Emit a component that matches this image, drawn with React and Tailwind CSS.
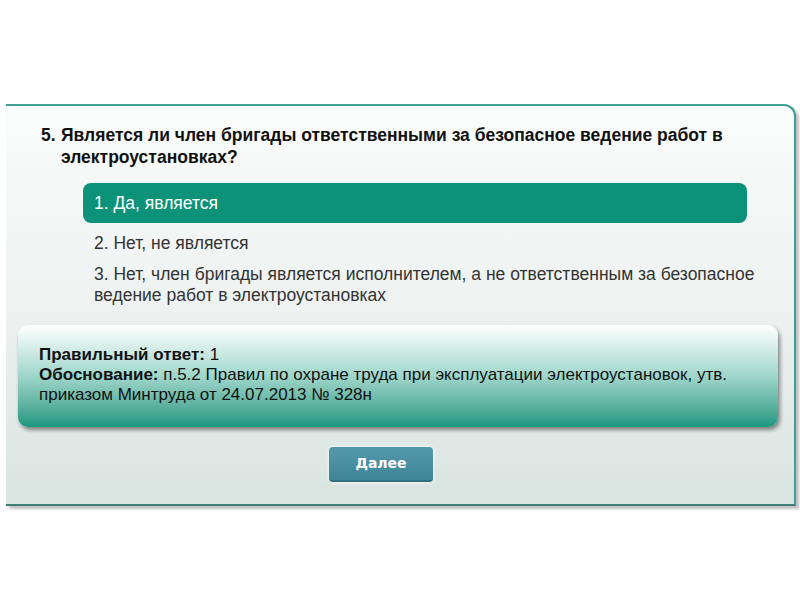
import React from "react";

const font = { fontFamily: '"Liberation Sans", Arial, sans-serif' };

export default function App() {
  return (
    <div className="w-[800px] h-[600px] bg-white pt-[104px]" style={font}>
      <div className="ml-[6px] w-[790px] h-[402px] rounded-tr-[12px] border-t-2 border-r-2 border-b-2 border-t-[#3f9f94] border-r-[#3f9f94] border-b-[#3d7f72] bg-gradient-to-b from-[#fbfcfc] via-[#eef2f1] to-[#d8e4e0] shadow-[3px_3px_3px_rgba(0,0,0,0.25)]">
        <div className="pt-[18px] pl-[35px] w-[760px] text-[17.5px] leading-[22px] font-bold text-[#111] flex">
          <span className="w-[20px] shrink-0">5.</span>
          <span>Является ли член бригады ответственными за безопасное ведение работ в электроустановках?</span>
        </div>

        <div className="ml-[77px] mt-[15px] flex flex-col">
          <div className="w-[664px] h-[40px] rounded-[8px] bg-[#0b9278] text-white text-[17.5px] flex items-center pl-[11px]">
            1. Да, является
          </div>
          <div className="pl-[11px] mt-[10px] text-[17.5px] leading-[20px] text-[#333]">2. Нет, не является</div>
          <div className="pl-[11px] mt-[11px] w-[700px] text-[17.5px] leading-[21px] text-[#333]">
            3. Нет, член бригады является исполнителем, а не ответственным за безопасное ведение работ в электроустановках
          </div>
        </div>

        <div className="ml-[12px] mt-[19px] w-[760px] h-[102px] rounded-[10px] bg-gradient-to-b from-[#ffffff] via-[#9fd6cb] to-[#139780] shadow-[2px_3px_4px_rgba(0,0,0,0.45)] pl-[21px] pt-[20px] text-[17px] leading-[20px] text-[#111]">
          <div><b>Правильный ответ:</b> 1</div>
          <div className="w-[728px]">
            <b>Обоснование:</b> п.5.2 Правил по охране труда при эксплуатации электроустановок, утв. приказом Минтруда от 24.07.2013 № 328н
          </div>
        </div>

        <div className="flex mt-[20px] pl-[323px]">
          <button className="w-[104px] h-[35px] rounded-[4px] bg-gradient-to-b from-[#5499ab] to-[#3f8597] border-b-2 border-[#2f6f7f] text-white font-bold text-[14px] shadow-[0_0_4px_rgba(255,255,255,0.9)]" style={{ fontFamily: '"DejaVu Sans", Verdana, sans-serif' }}>
            Далее
          </button>
        </div>
      </div>
    </div>
  );
}
